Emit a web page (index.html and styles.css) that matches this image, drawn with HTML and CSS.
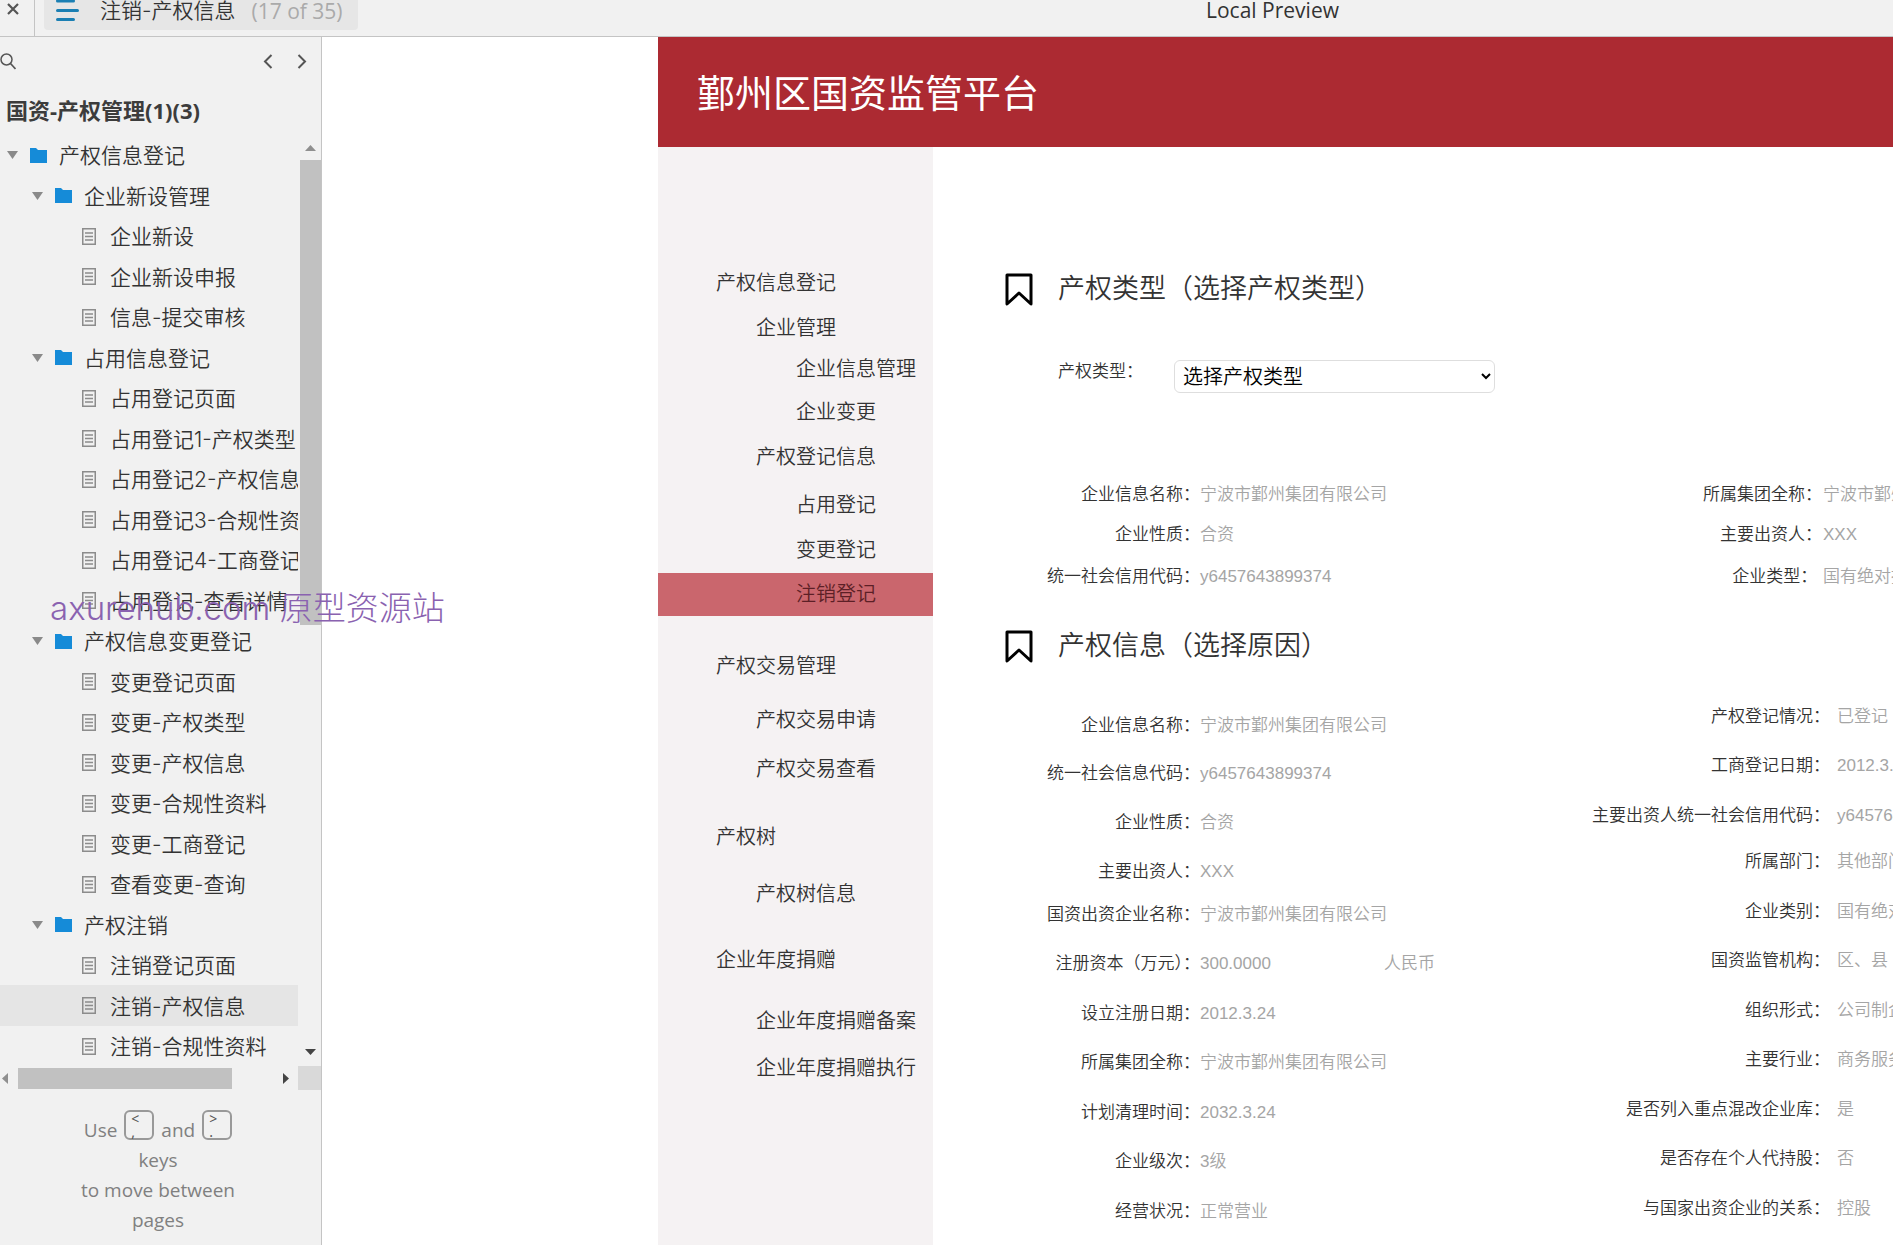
FILE: index.html
```html
<!DOCTYPE html>
<html lang="zh-CN">
<head>
<meta charset="utf-8">
<title>注销-产权信息</title>
<link rel="stylesheet" href="styles.css">
</head>
<body>
<svg class="defs" aria-hidden="true">
  <symbol id="folder" viewBox="0 0 17 15"><path d="M0 0h6l2 2h9v13H0z" fill="#158bd8"/></symbol>
  <symbol id="page" viewBox="0 0 14 17"><path d="M.75.75h12.5v15.5H.75z" fill="none" stroke="#8c8c8c" stroke-width="1.5"/><path d="M3 5h8M3 8.500h8M3 12h8" stroke="#8c8c8c" stroke-width="1.3"/></symbol>
  <symbol id="caret" viewBox="0 0 11 8"><path d="M0 0h11L5.500 8z" fill="#8a8a8a"/></symbol>
  <symbol id="mark" viewBox="0 0 28 33"><path d="M2 2h24v29l-12-11-12 11z" fill="none" stroke="#000" stroke-width="3" stroke-linejoin="round"/></symbol>
</svg>

<header class="topbar">
  <button class="close" aria-label="Close"><svg width="12" height="12" viewBox="0 0 12 12"><path d="M1 1l10 10M11 1L1 11" stroke="#555" stroke-width="2.200"/></svg></button>
  <button class="tab">
    <svg width="23" height="21" viewBox="0 0 23 21"><path d="M1.500 1h16M1.500 10.500h20M1.500 19.500h16" stroke="#1b7fb3" stroke-width="3" stroke-linecap="round"/></svg>
    <span>注销-产权信息</span><span class="count">(17 of 35)</span>
  </button>
  <span class="preview">Local Preview</span>
</header>

<div class="workspace">
  <aside class="explorer">
    <div class="tools">
      <button aria-label="Search"><svg width="16" height="17" viewBox="0 0 16 17"><circle cx="6.500" cy="6.500" r="5.500" fill="none" stroke="#555" stroke-width="1.500"/><path d="M10.500 10.500l5 5.500" stroke="#555" stroke-width="1.700"/></svg></button>
      <button class="prev" aria-label="Previous"><svg width="10" height="15" viewBox="0 0 10 15"><path d="M8.500 1L2 7.500 8.500 14" fill="none" stroke="#555" stroke-width="2"/></svg></button>
      <button aria-label="Next"><svg width="10" height="15" viewBox="0 0 10 15"><path d="M1.500 1L8 7.500 1.500 14" fill="none" stroke="#555" stroke-width="2"/></svg></button>
    </div>
    <h1 class="project">国资-产权管理(1)(3)</h1>
    <div class="treebox">
      <ul class="tree">
        <li class="root"><svg class="caret"><use href="#caret"/></svg><svg class="folder"><use href="#folder"/></svg><a href="#">产权信息登记</a></li>
        <li class="group"><svg class="caret"><use href="#caret"/></svg><svg class="folder"><use href="#folder"/></svg><a href="#">企业新设管理</a></li>
        <li><svg class="page"><use href="#page"/></svg><a href="#">企业新设</a></li>
        <li><svg class="page"><use href="#page"/></svg><a href="#">企业新设申报</a></li>
        <li><svg class="page"><use href="#page"/></svg><a href="#">信息-提交审核</a></li>
        <li class="group"><svg class="caret"><use href="#caret"/></svg><svg class="folder"><use href="#folder"/></svg><a href="#">占用信息登记</a></li>
        <li><svg class="page"><use href="#page"/></svg><a href="#">占用登记页面</a></li>
        <li><svg class="page"><use href="#page"/></svg><a href="#">占用登记1-产权类型</a></li>
        <li><svg class="page"><use href="#page"/></svg><a href="#">占用登记2-产权信息</a></li>
        <li><svg class="page"><use href="#page"/></svg><a href="#">占用登记3-合规性资料</a></li>
        <li><svg class="page"><use href="#page"/></svg><a href="#">占用登记4-工商登记</a></li>
        <li><svg class="page"><use href="#page"/></svg><a href="#">占用登记-查看详情</a></li>
        <li class="group"><svg class="caret"><use href="#caret"/></svg><svg class="folder"><use href="#folder"/></svg><a href="#">产权信息变更登记</a></li>
        <li><svg class="page"><use href="#page"/></svg><a href="#">变更登记页面</a></li>
        <li><svg class="page"><use href="#page"/></svg><a href="#">变更-产权类型</a></li>
        <li><svg class="page"><use href="#page"/></svg><a href="#">变更-产权信息</a></li>
        <li><svg class="page"><use href="#page"/></svg><a href="#">变更-合规性资料</a></li>
        <li><svg class="page"><use href="#page"/></svg><a href="#">变更-工商登记</a></li>
        <li><svg class="page"><use href="#page"/></svg><a href="#">查看变更-查询</a></li>
        <li class="group"><svg class="caret"><use href="#caret"/></svg><svg class="folder"><use href="#folder"/></svg><a href="#">产权注销</a></li>
        <li><svg class="page"><use href="#page"/></svg><a href="#">注销登记页面</a></li>
        <li class="selected"><svg class="page"><use href="#page"/></svg><a href="#">注销-产权信息</a></li>
        <li><svg class="page"><use href="#page"/></svg><a href="#">注销-合规性资料</a></li>
      </ul>
      <div class="vbar">
        <svg width="11" height="6" viewBox="0 0 11 6"><path d="M0 6L5.500 0 11 6z" fill="#8f8f8f"/></svg>
        <div class="vthumb"></div>
        <svg class="down" width="11" height="6" viewBox="0 0 11 6"><path d="M0 0h11L5.500 6z" fill="#444"/></svg>
      </div>
    </div>
    <div class="hbar">
      <svg width="6" height="11" viewBox="0 0 6 11"><path d="M6 0v11L0 5.500z" fill="#8f8f8f"/></svg>
      <div class="hthumb"></div>
      <svg class="right" width="6" height="11" viewBox="0 0 6 11"><path d="M0 0v11l6-5.500z" fill="#444"/></svg>
      <div class="corner"></div>
    </div>
    <p class="hint"><span class="keys">Use <kbd><span>&lt;</span><span>,</span></kbd> and <kbd><span>&gt;</span><span>.</span></kbd></span><br>keys<br>to move between<br>pages</p>
    <div class="watermark">axurehub.com 原型资源站</div>
  </aside>

  <div class="canvas">
    <div class="banner">鄞州区国资监管平台</div>
    <div class="body">
      <nav class="menu">
        <a class="l1" href="#">产权信息登记</a>
        <a class="l2" href="#">企业管理</a>
        <a class="l3" href="#">企业信息管理</a>
        <a class="l3" href="#">企业变更</a>
        <a class="l2" href="#">产权登记信息</a>
        <a class="l3" href="#">占用登记</a>
        <a class="l3" href="#">变更登记</a>
        <a class="l3 active" href="#">注销登记</a>
        <a class="l1" href="#">产权交易管理</a>
        <a class="l2" href="#">产权交易申请</a>
        <a class="l2" href="#">产权交易查看</a>
        <a class="l1" href="#">产权树</a>
        <a class="l2" href="#">产权树信息</a>
        <a class="l1" href="#">企业年度捐赠</a>
        <a class="l2" href="#">企业年度捐赠备案</a>
        <a class="l2" href="#">企业年度捐赠执行</a>
      </nav>
      <main class="content">
        <h2><svg class="mark"><use href="#mark"/></svg>产权类型（选择产权类型）</h2>
        <div class="type">
          <label for="type">产权类型：</label>
          <select id="type"><option>选择产权类型</option></select>
        </div>
        <div class="details brief">
          <dl>
            <dt>企业信息名称：</dt><dd>宁波市鄞州集团有限公司</dd>
            <dt>企业性质：</dt><dd>合资</dd>
            <dt>统一社会信用代码：</dt><dd>y6457643899374</dd>
          </dl>
          <dl>
            <dt>所属集团全称：</dt><dd>宁波市鄞州集团有限公司</dd>
            <dt>主要出资人：</dt><dd>XXX</dd>
            <dt>企业类型：&nbsp;</dt><dd>国有绝对控股</dd>
          </dl>
        </div>
        <h2><svg class="mark"><use href="#mark"/></svg>产权信息（选择原因）</h2>
        <div class="details full">
          <dl>
            <dt>企业信息名称：</dt><dd>宁波市鄞州集团有限公司</dd>
            <dt>统一社会信息代码：</dt><dd>y6457643899374</dd>
            <dt>企业性质：</dt><dd>合资</dd>
            <dt>主要出资人：</dt><dd>XXX</dd>
            <dt>国资出资企业名称：</dt><dd>宁波市鄞州集团有限公司</dd>
            <dt>注册资本（万元）：</dt><dd class="money"><span>300.0000</span><span>人民币</span></dd>
            <dt>设立注册日期：</dt><dd>2012.3.24</dd>
            <dt>所属集团全称：</dt><dd>宁波市鄞州集团有限公司</dd>
            <dt>计划清理时间：</dt><dd>2032.3.24</dd>
            <dt>企业级次：</dt><dd>3级</dd>
            <dt>经营状况：</dt><dd>正常营业</dd>
          </dl>
          <dl>
            <dt>产权登记情况：</dt><dd>已登记</dd>
            <dt>工商登记日期：</dt><dd>2012.3.24</dd>
            <dt>主要出资人统一社会信用代码：</dt><dd>y6457643899374</dd>
            <dt>所属部门：</dt><dd>其他部门</dd>
            <dt>企业类别：</dt><dd>国有绝对控股</dd>
            <dt>国资监管机构：</dt><dd>区、县</dd>
            <dt>组织形式：</dt><dd>公司制企业</dd>
            <dt>主要行业：</dt><dd>商务服务业</dd>
            <dt>是否列入重点混改企业库：</dt><dd>是</dd>
            <dt>是否存在个人代持股：</dt><dd>否</dd>
            <dt>与国家出资企业的关系：</dt><dd>控股</dd>
          </dl>
        </div>
      </main>
    </div>
  </div>
</div>
</body>
</html>
```
FILE: styles.css
```css
* { box-sizing: border-box; }
body {
  margin: 0;
  height: 100vh;
  display: flex;
  flex-direction: column;
  overflow: hidden;
  background: #fff;
  color: #333;
  font-family: "Noto Sans", "Noto Sans CJK SC", sans-serif;
  font-weight: 350;
}
button { border: 0; padding: 0; background: none; font: inherit; color: inherit; }
a { color: inherit; text-decoration: none; }
svg { display: block; flex: none; }
.defs { position: absolute; width: 0; height: 0; }

/* top bar */
.topbar {
  flex: none;
  display: flex;
  height: 37px;
  background: #f1f1f1;
  border-bottom: 1px solid #c4c4c4;
  font-size: 21px;
  line-height: 20px;
}
.close { width: 35px; padding: 3px 0 0 7px; border-right: 1px solid #c4c4c4; display: flex; }
.tab {
  display: flex;
  width: 314px;
  height: 30px;
  margin-left: 9px;
  padding-left: 12px;
  background: #e6e6e6;
  border-radius: 0 0 4px 4px;
  font-family: "Inter", "Noto Sans CJK SC", sans-serif;
  line-height: 22px;
}
.tab span { margin-left: 21px; }
.tab .count { margin-left: 16px; color: #aaa; font-family: "Open Sans", sans-serif; font-weight: 400; }
.preview { margin-left: 848px; font-family: "Open Sans", sans-serif; font-weight: 400; }

/* explorer panel */
.workspace { flex: 1; display: flex; min-height: 0; }
.explorer {
  position: relative;
  flex: none;
  width: 322px;
  background: #f1f1f1;
  border-right: 1px solid #c4c4c4;
}
.tools { display: flex; align-items: center; height: 48px; padding: 1px 14px 0 0; gap: 24px; }
.prev { margin-left: auto; }
.project { margin: 0; padding-left: 6px; font-size: 22px; line-height: 50px; font-weight: 700; color: #3c3c3c; }
.treebox { display: flex; justify-content: space-between; }
.tree {
  width: 298px;
  margin: 0;
  padding: 0;
  list-style: none;
  overflow: hidden;
  white-space: nowrap;
  font-family: "Inter", "Noto Sans CJK SC", sans-serif;
  font-size: 21px;
}
.tree li { display: flex; align-items: center; height: 40px; padding-left: 82px; }
.tree li:nth-child(even) { height: 41px; }
.tree a { padding-bottom: 2px; }
.tree .root { padding-left: 7px; }
.tree .group { padding-left: 32px; }
.tree .selected { background: #e5e5e5; }
.tree .page { width: 14px; height: 17px; margin-right: 14px; }
.tree .caret { width: 11px; height: 8px; margin-right: 12px; }
.tree .folder { width: 17px; height: 15px; margin-right: 12px; }
.vbar {
  display: flex;
  flex-direction: column;
  align-items: center;
  width: 21px;
  padding: 10px 0 11px;
}
.vthumb { width: 21px; height: 465px; margin-top: 9px; background: #c1c1c1; }
.down { margin-top: auto; }
.hbar { display: flex; align-items: center; height: 24px; padding-left: 2px; }
.hthumb { width: 214px; height: 21px; margin-left: 10px; background: #c1c1c1; }
.right { margin-left: 51px; }
.corner { align-self: stretch; margin-left: auto; width: 23px; background: #d9d9d9; }
.hint {
  margin: 0;
  padding: 19px 5px 0 0;
  text-align: center;
  font-family: "Open Sans", sans-serif;
  font-weight: 400;
  font-size: 19px;
  line-height: 30px;
  color: #808080;
}
.keys { display: inline-flex; align-items: flex-end; gap: 7px; height: 36px; }
kbd {
  display: flex;
  flex-direction: column;
  width: 30px;
  height: 30px;
  margin-bottom: 5px;
  padding-left: 5px;
  border: 2px solid #999;
  border-radius: 6px;
  font: 14px/13px "Noto Sans", sans-serif;
  text-align: left;
  color: #555;
}
.watermark {
  position: absolute;
  left: 50px;
  top: 548px;
  white-space: nowrap;
  font: 300 33px/46px "Inter", "Noto Sans CJK SC", sans-serif;
  color: #8a62b0;
  z-index: 1;
}

/* prototype page */
.canvas {
  flex: 1;
  min-width: 0;
  display: flex;
  flex-direction: column;
  padding-left: 336px;
  overflow: hidden;
  font-family: "Liberation Sans", "Noto Sans CJK SC", sans-serif;
}
.banner {
  flex: none;
  height: 110px;
  padding-left: 39px;
  background: #ac2a32;
  color: #fff;
  font-size: 38px;
  font-weight: 400;
  line-height: 114px;
}
.body { flex: 1; display: flex; min-height: 0; }
.menu {
  flex: none;
  width: 275px;
  padding-top: 124px;
  background: #f5f2f3;
  display: grid;
  align-content: start;
  grid-template-rows: 45px 41px 43px 45px 48px 45px 44px 72px 54px 49px 68px 57px 66px 61px 47px 24px;
  font-size: 20px;
  line-height: 24px;
}
.l1 { padding-left: 58px; }
.l2 { padding-left: 98px; }
.l3 { padding-left: 138px; }
.active { height: 43px; margin-top: -9px; line-height: 43px; background: #ca666d; color: #5c1f26; }

.content { flex: 1; min-width: 0; padding: 122px 0 0 72px; font-size: 17px; line-height: 24px; white-space: nowrap; }
h2 { display: flex; align-items: center; gap: 25px; margin: 0; font-size: 27px; line-height: 40px; font-weight: 350; }
.mark { width: 28px; height: 33px; }
.type { display: flex; margin: 51px 0 90px; padding-left: 53px; }
.type label { width: 116px; }
.type select {
  width: 321px;
  height: 33px;
  padding: 0 4px;
  border: 1px solid #dedede;
  border-radius: 6px;
  background: #fff;
  color: #000;
  font: inherit;
  font-size: 20px;
}
.details { display: grid; grid-template-columns: 500px 1fr; }
dl { display: grid; grid-template-columns: 195px auto; justify-content: start; align-content: start; margin: 0; }
dt { text-align: right; }
dd { margin: 0; color: #a5a5a5; }
.brief { margin-bottom: 37px; }
.brief dl { grid-template-rows: 40px 42px 24px; }
.brief dl + dl { grid-template-columns: 317px auto; column-gap: 1px; }
.full { margin-top: 39px; }
.full dl { padding-top: 9px; grid-template-rows: 48px 49px 49px 43px 49px 50px 49px 50px 49px 50px 24px; }
.full dl + dl {
  padding-top: 0;
  grid-template-columns: 325px auto;
  column-gap: 7px;
  grid-template-rows: 49px 50px 46px 50px 49px 50px 49px 50px 49px 50px 24px;
}
.money { display: grid; grid-template-columns: 184px auto; }
```
